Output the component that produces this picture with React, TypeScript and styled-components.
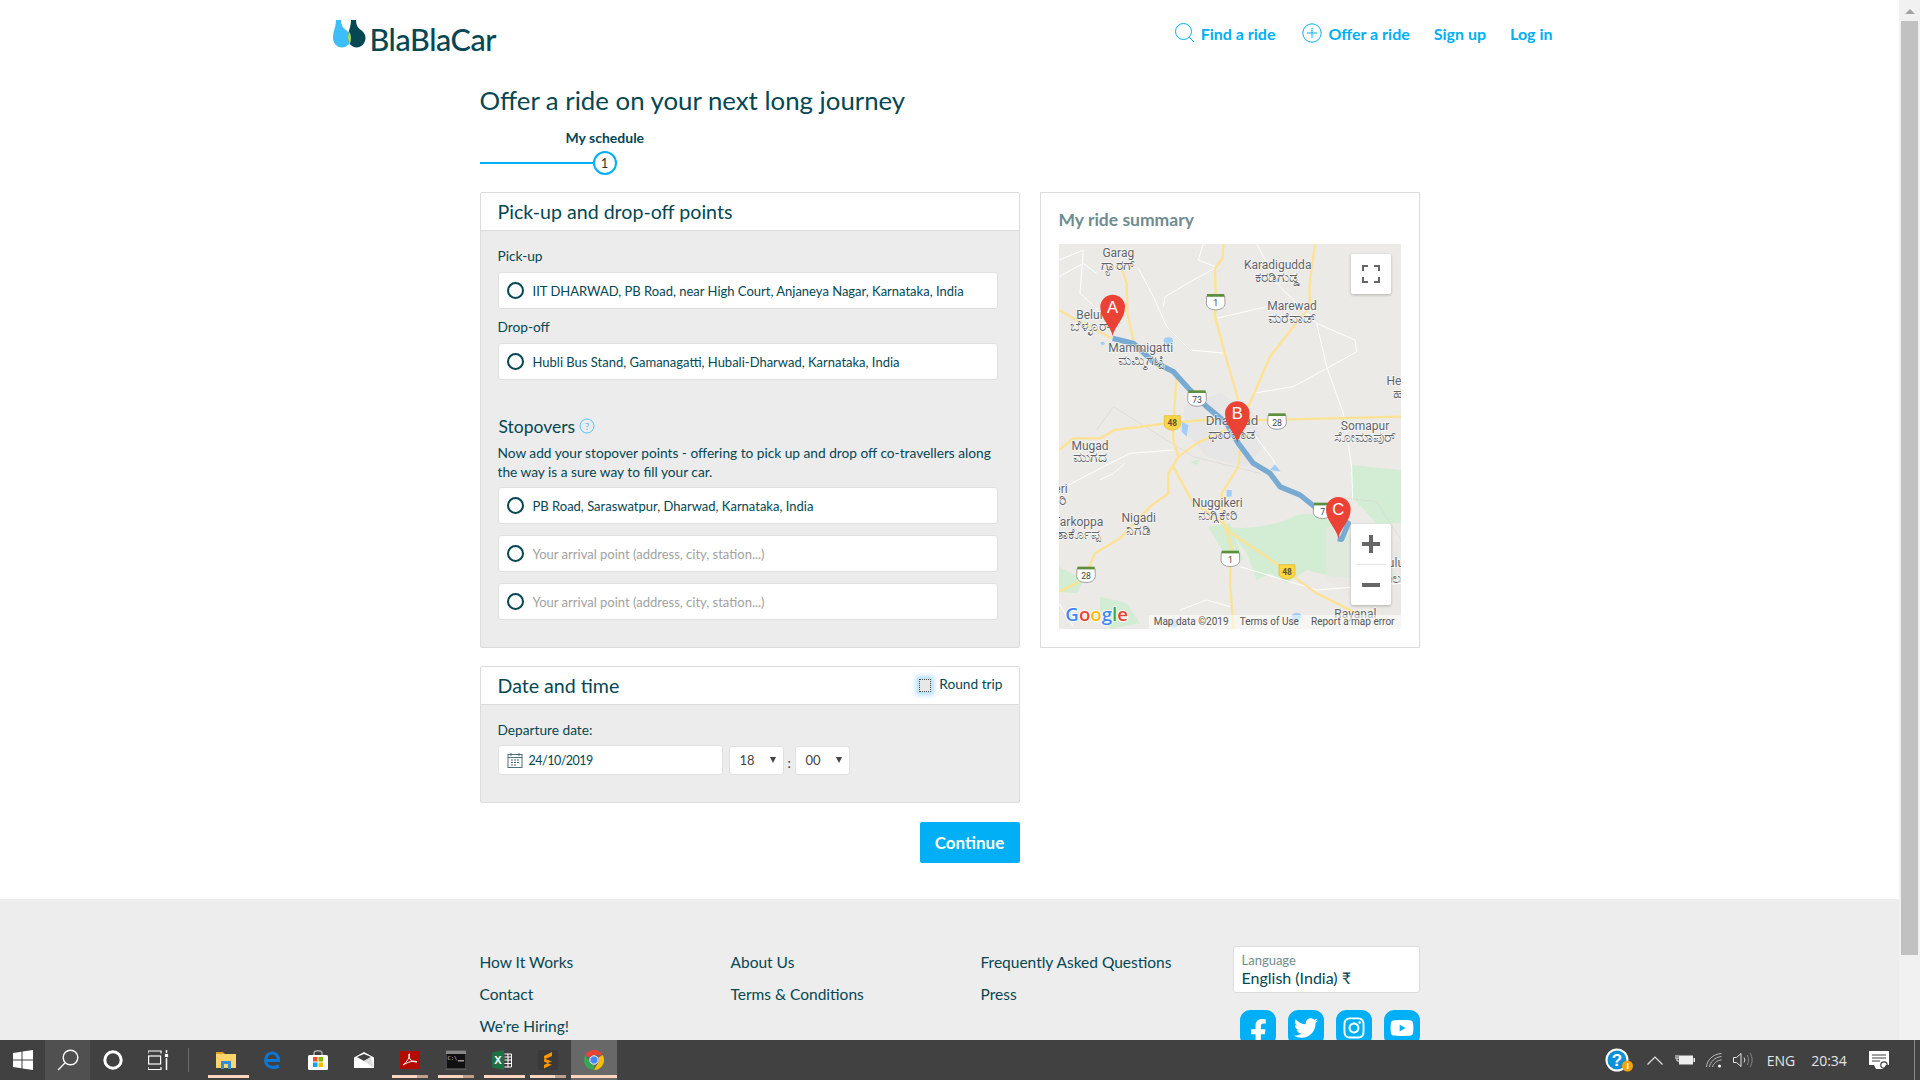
import { FC } from "react"
import styled, { createGlobalStyle } from "styled-components"
import { FaFacebookF, FaTwitter, FaInstagram, FaYoutube } from "react-icons/fa"

const ink = "#054752"
const blue = "#00aff5"
const font = `Lato, "Noto Sans", sans-serif`

const Global = createGlobalStyle`
  html, body { margin: 0; padding: 0; background: #fff; }
  * { box-sizing: border-box; }
`

const Screen = styled.div`
  width: 1920px;
  height: 1080px;
  overflow: hidden;
  display: flex;
  flex-direction: column;
  font-family: ${font};
  color: ${ink};
`
const Viewport = styled.div`
  height: 1040px;
  display: flex;
`
const Page = styled.div`
  flex: 1;
  display: flex;
  flex-direction: column;
  overflow: hidden;
`
const ScrollTrack = styled.div`
  width: 21px;
  background: #f1f1f1;
  padding: 9px 2px 0;
  display: flex;
  flex-direction: column;
  align-items: center;
`
const ScrollArrow = styled.div`
  width: 0;
  height: 0;
  border-left: 5px solid transparent;
  border-right: 5px solid transparent;
  border-bottom: 5px solid #a3a3a3;
`
const ScrollThumb = styled.div`
  width: 17px;
  height: 934px;
  margin-top: 7px;
  background: #c1c1c1;
`

const Header = styled.header`
  width: 1234px;
  height: 70px;
  margin: 0 auto;
  padding: 20px 14px 0 0;
  display: flex;
  justify-content: space-between;
  flex: none;
`
const Logo = styled.div`
  display: flex;
  align-items: flex-end;
  gap: 4px;
  height: 36px;
`
const LogoMarkBox = styled.div`
  align-self: flex-start;
  display: flex;
`
const LogoText = styled.span`
  font-size: 30.5px;
  line-height: 33px;
  font-weight: 500;
  letter-spacing: -0.4px;
  color: ${ink};
`
const Nav = styled.nav`
  display: flex;
  align-items: center;
  height: 26px;
`
const NavLink = styled.a<{ $left: number }>`
  display: flex;
  align-items: center;
  gap: 6px;
  margin-left: ${(p) => p.$left}px;
  color: ${blue};
  font-size: 16px;
  font-weight: 700;
`

const Main = styled.main`
  width: 940px;
  margin: 0 auto;
  flex: none;
`
const Title = styled.h1`
  margin: 15px 0 0;
  font-size: 25.8px;
  line-height: 30px;
  font-weight: 400;
  color: ${ink};
`
const StepLabel = styled.div`
  margin-top: 14px;
  padding-left: 86px;
  font-size: 14px;
  line-height: 18px;
  font-weight: 700;
`
const StepTrack = styled.div`
  margin-top: 4px;
  display: flex;
  align-items: center;
`
const StepLine = styled.div`
  width: 113px;
  height: 2px;
  background: ${blue};
`
const StepDot = styled.div`
  width: 24px;
  height: 24px;
  border: 2px solid ${blue};
  border-radius: 50%;
  display: flex;
  align-items: center;
  justify-content: center;
  font-size: 13px;
  color: #333;
`
const Columns = styled.div`
  margin-top: 17px;
  display: flex;
  align-items: flex-start;
  gap: 20px;
`
const LeftColumn = styled.div`
  width: 540px;
  display: flex;
  flex-direction: column;
`
const Panel = styled.section`
  border: 1px solid #dcdcdc;
  border-radius: 2px;
  background: #ececec;
`
const DatePanel = styled(Panel)`
  margin-top: 18px;
`
const PanelHead = styled.div`
  height: 38px;
  padding: 0 16px 0 17px;
  background: #fff;
  border-bottom: 1px solid #dcdcdc;
  display: flex;
  align-items: center;
  justify-content: space-between;
`
const PanelTitle = styled.h2`
  margin: 0;
  font-size: 19.6px;
  font-weight: 400;
  color: ${ink};
`
const PanelBody = styled.div`
  padding: 16px 21px 27px 17px;
`
const FieldLabel = styled.div<{ $top?: number }>`
  margin-top: ${(p) => p.$top ?? 0}px;
  font-size: 13.7px;
  line-height: 18px;
`
const PlaceField = styled.div<{ $top?: number }>`
  margin-top: ${(p) => p.$top ?? 0}px;
  height: 37px;
  padding-left: 8px;
  display: flex;
  align-items: center;
  gap: 9px;
  background: #fff;
  border: 1px solid #e0e0e0;
  border-radius: 3px;
`
const Radio = styled.span`
  width: 17px;
  height: 17px;
  flex: none;
  border: 2.5px solid ${ink};
  border-radius: 50%;
`
const PlaceText = styled.span<{ $empty?: boolean }>`
  font-size: 13px;
  color: ${(p) => (p.$empty ? "#a2a2a2" : ink)};
`
const StopHead = styled.div`
  margin-top: 34px;
  padding-left: 1px;
  height: 24px;
  display: flex;
  align-items: center;
  gap: 4px;
  font-size: 17.5px;
`
const StopNote = styled.p`
  margin: 5px 0 6px;
  font-size: 13.7px;
  line-height: 19px;
`
const RoundTrip = styled.label`
  display: flex;
  align-items: center;
  gap: 8px;
  font-size: 13.7px;
  padding-bottom: 4px;
`
const Check = styled.span`
  width: 12px;
  height: 13px;
  margin-top: 4px;
  background: #e8e8e8;
  border: 1px dotted #444;
  box-shadow: 0 0 5px 3px rgba(120, 200, 245, 0.6);
`
const DateRow = styled.div`
  margin-top: 6px;
  display: flex;
  align-items: center;
`
const DateField = styled.div`
  width: 225px;
  height: 30px;
  padding-left: 8px;
  display: flex;
  align-items: center;
  gap: 6px;
  font-size: 12.5px;
  letter-spacing: -0.5px;
  background: #fff;
  border: 1px solid #e0e0e0;
  border-radius: 3px;
`
const TimeSelect = styled.div`
  width: 55px;
  height: 29px;
  padding: 0 7px 0 10px;
  display: flex;
  align-items: center;
  justify-content: space-between;
  font-size: 13px;
  color: #444;
  background: #fff;
  border: 1px solid #e0e0e0;
  border-radius: 3px;
`
const HourSelect = styled(TimeSelect)`
  margin-left: 6px;
`
const SelectCaret = styled.span`
  width: 0;
  height: 0;
  border-left: 3.5px solid transparent;
  border-right: 3.5px solid transparent;
  border-top: 6px solid #444;
`
const Colon = styled.span`
  width: 11px;
  padding-top: 6px;
  text-align: center;
  font-size: 13px;
`
const ContinueButton = styled.button`
  margin-top: 19px;
  align-self: flex-end;
  width: 100px;
  height: 41px;
  border: none;
  border-radius: 2px;
  background: ${blue};
  color: #fff;
  font-family: ${font};
  font-size: 17px;
  font-weight: 700;
`

const SummaryPanel = styled.aside`
  width: 380px;
  height: 456px;
  padding: 0 18px;
  border: 1px solid #dcdcdc;
`
const SummaryTitle = styled.h3`
  margin: 0;
  height: 51px;
  padding-top: 14px;
  font-size: 17.5px;
  line-height: 26px;
  font-weight: 700;
  color: #708c91;
`
const MapBox = styled.div`
  position: relative;
  width: 342px;
  height: 385px;
  background: #ebeae6;
  overflow: hidden;
`
const MapControl = styled.div`
  position: absolute;
  right: 10px;
  width: 40px;
  background: #fff;
  border-radius: 2px;
  box-shadow: 0 1px 3px rgba(0, 0, 0, 0.25);
  display: flex;
  flex-direction: column;
  align-items: center;
  justify-content: center;
`
const FullscreenControl = styled(MapControl)`
  top: 10px;
  height: 40px;
`
const ZoomControl = styled(MapControl)`
  top: 280px;
  height: 81px;
`
const ZoomDivider = styled.div`
  width: 30px;
  height: 1px;
  background: #e6e6e6;
`
const ZoomCell = styled.div`
  height: 40px;
  display: flex;
  align-items: center;
  justify-content: center;
`

const Footer = styled.footer`
  margin-top: 36px;
  flex: 1;
  background: #ededed;
`
const FooterGrid = styled.div`
  width: 940px;
  margin: 0 auto;
  padding-top: 47px;
  display: grid;
  grid-template-columns: 251px 250px 252px 187px;
`
const LinkColumn = styled.div`
  display: flex;
  flex-direction: column;
`
const FooterLink = styled.a`
  font-size: 15.5px;
  line-height: 32px;
  color: ${ink};
`
const LanguageBox = styled.div`
  width: 187px;
  height: 47px;
  padding: 6px 8px 0;
  background: #fff;
  border: 1px solid #dcdcdc;
  border-radius: 3px;
`
const LanguageLabel = styled.div`
  font-size: 13px;
  line-height: 15px;
  color: #708c91;
`
const LanguageValue = styled.div`
  font-size: 16px;
  line-height: 19px;
`
const Socials = styled.div`
  margin: 17px 0 0 7px;
  display: flex;
  gap: 12px;
`
const Social = styled.a`
  width: 36px;
  height: 36px;
  border-radius: 10px;
  background: ${blue};
  color: #fff;
  display: flex;
  align-items: center;
  justify-content: center;
  font-size: 24px;
`
const FacebookGlyph = styled(Social)`
  align-items: flex-end;
  padding-left: 2px;
  font-size: 27px;
`

const Taskbar = styled.div`
  height: 40px;
  display: flex;
  align-items: stretch;
  background: #414141;
`
const TaskCell = styled.div<{ $w?: number; $bg?: string }>`
  position: relative;
  width: ${(p) => p.$w ?? 46}px;
  flex: none;
  display: flex;
  align-items: center;
  justify-content: center;
  background: ${(p) => p.$bg ?? "transparent"};
`
const TaskSep = styled.div`
  width: 1px;
  height: 24px;
  margin: 8px 14px 0 7px;
  background: #6a6a6a;
`
const RunBar = styled.span<{ $split?: boolean }>`
  position: absolute;
  left: 5px;
  right: ${(p) => (p.$split ? 5 : 0)}px;
  bottom: 2px;
  height: 3px;
  background: ${(p) =>
    p.$split
      ? "linear-gradient(90deg,#ffd6bf 0 70%,#bfa08f 70% 100%)"
      : "#ffd6bf"};
`
const FullBar = styled(RunBar)`
  left: 0;
`
const Tray = styled.div`
  margin-left: auto;
  display: flex;
  align-items: center;
  color: #e4e4e4;
  font-family: "Open Sans", "Noto Sans", sans-serif;
  font-size: 14px;
`
const TrayItem = styled.div<{ $w: number }>`
  width: ${(p) => p.$w}px;
  height: 40px;
  display: flex;
  align-items: center;
  justify-content: center;
`
const DesktopEdge = styled.div`
  width: 1px;
  height: 40px;
  margin: 0 5px 0 9px;
  background: #8a8a8a;
`

const LogoMark = () => (
  <svg width="33" height="28" viewBox="0 0 33 28">
    <path d="M3 0 H8 C8 5 10 8 13 10 C16 12 18 15 18 18 C18 23 14 27.5 9 27.5 C4 27.5 0 23 0 18 C0 11 3 7 3 0Z" fill="#3dbdf9" />
    <path d="M18 0 H23 C23 5 25 8 28 10 C31 12 32.5 15 32.5 18 C32.5 23 28.5 27.5 23.5 27.5 C19 27.5 15 23 15 18 C15 11 18 7 18 0Z" fill="#054752" />
    <path d="M16 11.5 C15 14 15 16 15 18 C15 20.5 15.8 22.5 16.6 24 C17.6 22.5 18 20.5 18 18 C18 15.5 17.2 13 16 11.5Z" fill="#a3d86a" />
  </svg>
)

const HelpIcon = () => (
  <svg width="16" height="16" viewBox="0 0 16 16">
    <circle cx="8" cy="8" r="7" fill="none" stroke="#54c6f7" strokeWidth="1" />
    <text x="8" y="11.5" textAnchor="middle" fontSize="10" fontFamily="Lato" fill="#54c6f7">?</text>
  </svg>
)

const CalendarIcon = () => (
  <svg width="16" height="16" viewBox="0 0 16 16" fill="none" stroke="#4f7076" strokeWidth="1">
    <rect x="1" y="2.5" width="14" height="13" />
    <path d="M1 5.5H15M4 1V4M12 1V4" />
    <path d="M4 8H6M7 8H9M10 8H12M4 10.5H6M7 10.5H9M10 10.5H12M4 13H6M7 13H9" />
  </svg>
)

type Label = { x: number; y: number; t: string; s?: number }
const labels: Label[] = [
  { x: 235, y: 232, t: "Garag" },
  { x: 235, y: 270, t: "ಗ್ಯಾರಗ್", s: 42 },
  { x: 713, y: 268, t: "Karadigudda" },
  { x: 713, y: 307, t: "ಕರಡಿಗುಡ್ಡ", s: 42 },
  { x: 756, y: 391, t: "Marewad" },
  { x: 756, y: 430, t: "ಮರೆವಾಡ್", s: 42 },
  { x: 150, y: 416, t: "Belur" },
  { x: 150, y: 454, t: "ಬೆಳ್ಳೂರ್", s: 42 },
  { x: 302, y: 515, t: "Mammigatti" },
  { x: 302, y: 554, t: "ಮಮ್ಮಿಗಟ್ಟಿ", s: 42 },
  { x: 1105, y: 615, t: "Hebballi" },
  { x: 1105, y: 654, t: "ಹೆಬ್ಬಳ್ಳಿ", s: 42 },
  { x: 576, y: 735, t: "Dharwad", s: 40 },
  { x: 576, y: 778, t: "ಧಾರವಾಡ", s: 46 },
  { x: 975, y: 749, t: "Somapur" },
  { x: 975, y: 787, t: "ಸೋಮಾಪುರ್", s: 42 },
  { x: 150, y: 809, t: "Mugad" },
  { x: 150, y: 847, t: "ಮುಗದ", s: 42 },
  { x: 52, y: 938, t: "Keri" },
  { x: 52, y: 976, t: "ಕೇರಿ", s: 42 },
  { x: 115, y: 1037, t: "Tarkoppa" },
  { x: 115, y: 1077, t: "ತಾರ್ಕೊಪ್ಪ", s: 42 },
  { x: 296, y: 1026, t: "Nigadi" },
  { x: 296, y: 1064, t: "ನಿಗಡಿ", s: 42 },
  { x: 532, y: 982, t: "Nuggikeri" },
  { x: 532, y: 1021, t: "ನುಗ್ಗಿಕೇರಿ", s: 42 },
  { x: 1055, y: 1160, t: "Hulu" },
  { x: 1055, y: 1208, t: "ಹುಲು", s: 42 },
  { x: 946, y: 1315, t: "Rayanal" },
]

const Shield = ({ x, y, n }: { x: number; y: number; n: string }) => (
  <g>
    <path d={`M${x - 27} ${y - 18} H${x + 27} L${x + 28} ${y + 6} Q${x + 26} ${y + 22} ${x} ${y + 24} Q${x - 26} ${y + 22} ${x - 28} ${y + 6}Z`} fill="#fff" stroke="#777" strokeWidth="2" />
    <rect x={x - 26} y={y - 24} width="52" height="8" fill="#5d8f3c" />
    <text x={x} y={y + 13} textAnchor="middle" fontSize="26" fontFamily="Roboto" fill="#444">{n}</text>
  </g>
)
const YellowShield = ({ x, y, n }: { x: number; y: number; n: string }) => (
  <g>
    <path d={`M${x - 24} ${y - 21} H${x + 24} V${y + 8} Q${x + 22} ${y + 19} ${x} ${y + 23} Q${x - 22} ${y + 19} ${x - 24} ${y + 8}Z`} fill="#fcd645" stroke="#dcb52c" strokeWidth="2" />
    <text x={x} y={y + 10} textAnchor="middle" fontSize="25" fontWeight="700" fontFamily="Roboto" fill="#5f5233">{n}</text>
  </g>
)
const Pin = ({ x, y, l }: { x: number; y: number; l: string }) => (
  <g>
    <path d={`M${x} ${y} C${x - 6} ${y - 32} ${x - 37} ${y - 50} ${x - 37} ${y - 87} A37 37 0 1 1 ${x + 37} ${y - 87} C${x + 37} ${y - 50} ${x + 6} ${y - 32} ${x} ${y}Z`} fill="#ea4335" />
    <text x={x} y={y - 70} textAnchor="middle" fontSize="50" fontFamily="Liberation Sans" fill="#fff">{l}</text>
  </g>
)

const MapDrawing = () => (
  <svg width="342" height="385" viewBox="57 192 1026 1155" fontFamily="Roboto, sans-serif">
    <rect x="57" y="192" width="1026" height="1155" fill="#ebeae6" />
    <g fill="#d2edd3">
      <path d="M935 855 L1083 870 V1030 L1010 1030 L935 950Z" />
      <path d="M560 1040 C620 1050 700 1040 760 1010 C800 990 860 1010 900 1050 L1000 1110 L1083 1200 L880 1190 L800 1170 L740 1210 L690 1180 L650 1200 L620 1120Z" />
      <path d="M505 1040 L570 1030 L610 1140 L560 1130Z" />
      <path d="M57 1160 L130 1200 L110 1240 L57 1235Z" />
      <path d="M180 1250 L260 1270 L300 1330 L210 1347 L180 1300Z" />
      <path d="M450 845 L480 838 L470 855Z" />
    </g>
    <path d="M430 680 L540 640 L640 700 L670 800 L620 860 L500 830 L440 760Z" fill="#e6e6e7" />
    <path d="M860 1040 L930 1040 L1000 1100 L1083 1080 V1340 L860 1200Z" fill="#e7e6e3" opacity=".6" />
    <g fill="none" stroke="#fff" strokeWidth="3">
      <path d="M57 240 L130 210 L120 340 L175 390" />
      <path d="M57 290 L130 250 L170 280" />
      <path d="M295 265 L340 350 L380 440 L450 510 L560 520" />
      <path d="M490 192 L475 240 L530 262" />
      <path d="M370 380 L375 350 L460 300 L525 265" />
      <path d="M530 415 L680 380" />
      <path d="M650 192 L720 320 L830 430 L860 560 L910 700 L935 860 L938 960" />
      <path d="M830 430 L945 480 L950 515 L870 560 L760 620 L640 640" />
      <path d="M57 930 L190 860 L270 820 L400 810" />
      <path d="M180 900 L220 880 L255 850" />
      <path d="M640 760 L700 840 L720 880" />
      <path d="M600 1160 L700 1190 L830 1230 L1083 1210" />
      <path d="M57 1270 L100 1340" />
      <path d="M420 1290 L500 1260 L570 1280" />
    </g>
    <g fill="none" stroke="#d8d7d3" strokeWidth="2">
      <path d="M170 750 L220 680 L380 780 L460 830 L660 880" />
      <path d="M880 950 L1010 965 L1083 1080" />
    </g>
    <g fill="none" stroke="#fde293" strokeWidth="7">
      <path d="M550 192 L548 235 L525 265 L527 340 L525 410 L560 540 L595 660" />
      <path d="M825 192 L808 320 L810 380 L760 440 L690 530 L625 680" />
      <path d="M57 390 L110 420 L215 475" />
      <path d="M240 250 L260 310 L262 400 L280 480" />
      <path d="M57 810 L100 775 L180 775 L225 750 L380 730 L490 720 L680 720 L1083 710" />
      <path d="M410 590 L400 730 L400 780 L415 830 L385 880 L385 940 L330 980 L240 1075 L165 1120 L130 1200 L57 1235" />
      <path d="M400 860 L460 970 L540 1020 L575 1060 L680 1130 L740 1175 L830 1240 L950 1300" />
      <path d="M600 810 L595 860 L545 940 L545 1010 L575 1100 L570 1200 L580 1347" />
      <path d="M415 830 L470 790 L570 745" />
    </g>
    <g fill="#a3cdf5">
      <ellipse cx="385" cy="482" rx="14" ry="10" />
      <ellipse cx="188" cy="490" rx="6" ry="5" />
      <path d="M425 725 L445 735 L440 770 L425 755Z" />
      <path d="M690 870 L705 853 L722 875Z" />
      <rect x="560" y="930" width="15" height="20" />
      <ellipse cx="770" cy="1310" rx="15" ry="12" />
      <ellipse cx="400" cy="1330" rx="18" ry="12" />
    </g>
    <path d="M218 475 L280 490 L340 545 L400 575 L450 630 L500 680 L560 730 L595 790 L640 850 L690 880 L720 920 L780 945 L830 985 L900 1020 L925 1030 L905 1078 L893 1076" fill="none" stroke="#6ba3cf" strokeWidth="16" strokeLinejoin="round" opacity=".9" />
    {labels.map((a) => (
      <text key={a.t} x={a.x} y={a.y} textAnchor="middle" fontSize={a.s ?? 36} fill="#5f6368" stroke="#fff" strokeWidth="4" strokeOpacity=".75" paintOrder="stroke">{a.t}</text>
    ))}
    <Shield x={527} y={366} n="1" />
    <Shield x={471} y={655} n="73" />
    <Shield x={711} y={724} n="28" />
    <Shield x={138} y={1184} n="28" />
    <Shield x={571} y={1136} n="1" />
    <Shield x={848} y={992} n="7" />
    <YellowShield x={397} y={728} n="48" />
    <YellowShield x={741} y={1175} n="48" />
    <Pin x={218} y={468} l="A" />
    <Pin x={592} y={788} l="B" />
    <Pin x={895} y={1075} l="C" />
    <rect x="327" y="1305" width="756" height="42" fill="#fff" fillOpacity=".55" />
    <text x="341" y="1335" fontSize="30" fill="#555">Map data ©2019</text>
    <text x="599" y="1335" fontSize="30" fill="#555">Terms of Use</text>
    <text x="813" y="1335" fontSize="30" fill="#555">Report a map error</text>
    <text x="76" y="1323" fontSize="56" fontWeight="600" fontFamily="Open Sans, sans-serif" stroke="#fff" strokeWidth="5" paintOrder="stroke">
      <tspan fill="#4285f4">G</tspan><tspan fill="#ea4335">o</tspan><tspan fill="#fbbc05">o</tspan><tspan fill="#4285f4">g</tspan><tspan fill="#34a853">l</tspan><tspan fill="#ea4335">e</tspan>
    </text>
  </svg>
)

const taskW = { width: 20, height: 20 }

const WindowsIcon = () => (
  <svg {...taskW} viewBox="0 0 20 20"><path d="M0 3L8.5 1.8V9.5H0ZM9.5 1.6L20 0V9.5H9.5ZM0 10.5H8.5V18.2L0 17ZM9.5 10.5H20V20L9.5 18.4Z" fill="#fff" /></svg>
)
const SearchGlyph = () => (
  <svg width="22" height="22" viewBox="0 0 22 22" fill="none" stroke="#fff" strokeWidth="1.4"><circle cx="13.5" cy="8.5" r="7.3" /><path d="M8.2 13.8L1 21" /></svg>
)
const CortanaIcon = () => (
  <svg {...taskW} viewBox="0 0 20 20"><circle cx="10" cy="10" r="8.2" fill="none" stroke="#fff" strokeWidth="3" /></svg>
)
const TaskViewIcon = () => (
  <svg width="21" height="20" viewBox="0 0 21 20" fill="none" stroke="#fff" strokeWidth="1.2"><path d="M0 3.5V1H13V3.5M0 17V19.5H13V17" /><rect x="0.6" y="6" width="12" height="8" /><path d="M18.5 0V3M18.5 8V20" strokeWidth="1.5" /><rect x="17.5" y="4.5" width="2" height="2" fill="#fff" /></svg>
)
const ExplorerIcon = () => (
  <svg {...taskW} viewBox="0 0 20 20"><path d="M0 2H7L9 4H0Z" fill="#e0a020" /><rect y="4" width="20" height="14" fill="#fbd56b" /><path d="M5 19V11H15V19H12V14H8V19Z" fill="#2f8fd8" /></svg>
)
const EdgeIcon = () => (
  <svg width="17" height="18" viewBox="0 0 17 18">
    <path d="M2 9.5 H14.5 C14.5 4.5 11.5 2 8 2 C4 2 1.7 5.5 1.7 9.5 C1.7 14 5 16.4 9 16.4 C11 16.4 13 16 15 15" stroke="#0a78d7" strokeWidth="3.2" fill="none" />
  </svg>
)
const StoreIcon = () => (
  <svg {...taskW} viewBox="0 0 20 20">
    <path d="M6 5V3C6 0 14 0 14 3V5" fill="none" stroke="#aaa" strokeWidth="1.5" />
    <rect y="5" width="20" height="15" rx="1.5" fill="#fff" />
    <rect x="5" y="7" width="4.5" height="4.5" fill="#f25022" /><rect x="10.5" y="7" width="4.5" height="4.5" fill="#7fba00" />
    <rect x="5" y="12.5" width="4.5" height="4.5" fill="#00a4ef" /><rect x="10.5" y="12.5" width="4.5" height="4.5" fill="#ffb900" />
  </svg>
)
const MailIcon = () => (
  <svg {...taskW} viewBox="0 0 20 20"><path d="M0 7.5L10 2L20 7.5V18H0Z" fill="#fff" /><path d="M3 7L10 4L17 7L10 11Z" fill="#414141" /><path d="M10 11L17 7L20 18Z" fill="#ddd" /></svg>
)
const AcrobatIcon = () => (
  <svg {...taskW} viewBox="0 0 20 20"><rect width="20" height="18" y="1" fill="#b30b00" /><path d="M3 15C7 12 10 7 9.5 4C9 3 8 5 10 9C11 11 14 12 17 12C14 10 8 12 3 15Z" fill="none" stroke="#fff" strokeWidth="1" /></svg>
)
const ConsoleIcon = () => (
  <svg {...taskW} viewBox="0 0 20 20"><rect y="1" width="20" height="18" fill="#111" stroke="#777" /><rect y="1" width="20" height="3" fill="#888" /><text x="1.5" y="10" fontSize="5.5" fontFamily="DejaVu Sans Mono" fill="#ccc">C:\</text><rect x="12" y="10" width="6" height="1.5" fill="#999" /></svg>
)
const ExcelIcon = () => (
  <svg {...taskW} viewBox="0 0 20 20"><path d="M0 2.5L12 0V20L0 17.5Z" fill="#1d7145" /><text x="6" y="14" textAnchor="middle" fontSize="11" fontWeight="700" fontFamily="Liberation Sans" fill="#fff">X</text><path d="M12.5 4H19.5V17H12.5M12.5 7H19.5M12.5 10H19.5M12.5 13.5H19.5M16 4V17" fill="none" stroke="#fff" strokeWidth="1" /></svg>
)
const SublimeIcon = () => (
  <svg {...taskW} viewBox="0 0 20 20"><rect width="20" height="20" fill="#3a3a3a" /><path d="M14 2L6 6V9.5L14 6ZM6 8.5L14 11.5V15L6 11.5ZM14 11L6 15V18.5L14 14.5Z" fill="#ff9800" /></svg>
)
const ChromeIcon = () => (
  <svg {...taskW} viewBox="0 0 20 20">
    <path d="M10 0A10 10 0 0 1 18.7 5H10A5 5 0 0 0 5.5 7.8L1.5 4.8A10 10 0 0 1 10 0Z" fill="#ea4335" />
    <path d="M18.7 5A10 10 0 0 1 10 20L14.3 12.5A5 5 0 0 0 14.3 7.5Z" fill="#fbbc05" />
    <path d="M10 20A10 10 0 0 1 1.5 4.8L5.7 12.5A5 5 0 0 0 10.5 15Z" fill="#34a853" />
    <circle cx="10" cy="10" r="4.2" fill="#4285f4" stroke="#fff" strokeWidth="1" />
  </svg>
)
const TrayHelp = () => (
  <svg width="28" height="24" viewBox="0 0 28 24">
    <circle cx="12" cy="12" r="10.5" fill="#0e8fd8" stroke="#fff" strokeWidth="2" />
    <text x="12" y="18" textAnchor="middle" fontSize="17" fontWeight="700" fontFamily="Liberation Sans" fill="#fff">?</text>
    <circle cx="22.5" cy="18" r="5.5" fill="#f5a300" />
    <rect x="21.8" y="15" width="1.6" height="6" fill="#fff" />
  </svg>
)
const CaretUp = () => (
  <svg width="16" height="9" viewBox="0 0 16 9" fill="none" stroke="#e4e4e4" strokeWidth="1.2"><path d="M0.5 8.5L8 1L15.5 8.5" /></svg>
)
const BatteryIcon = () => (
  <svg width="20" height="12" viewBox="0 0 20 12"><path d="M0 2H4M0 4H4M2 4V7H5" fill="none" stroke="#eee" strokeWidth="1" /><rect x="4" y="1.5" width="14" height="9" fill="#eee" /><rect x="18.5" y="4" width="1.5" height="4" fill="#eee" /></svg>
)
const WifiIcon = () => (
  <svg width="16" height="15" viewBox="0 0 16 15" fill="none" stroke="#bbb" strokeWidth="1"><path d="M0.5 14C1 7 7 1 15.5 0.5M3.5 14C4 9 9 4 15.5 3.5M6.5 14C7 11 11 7 15.5 7" /><circle cx="13.5" cy="13" r="1.5" fill="#fff" stroke="none" /></svg>
)
const VolumeIcon = () => (
  <svg width="20" height="16" viewBox="0 0 20 16" fill="none" stroke="#e4e4e4" strokeWidth="1"><path d="M0.5 5.5H3.5L8 1.5V14.5L3.5 10.5H0.5Z" /><path d="M11 5.5C12 7 12 9 11 10.5" /><path d="M14 3C16 6 16 10 14 13M17 1C19.8 5 19.8 11 17 15" stroke="#888" /></svg>
)
const NotifyIcon = () => (
  <svg width="20" height="20" viewBox="0 0 20 20"><path d="M0 1H20V15H17L14 19H7L5 15H0Z" fill="#fff" /><path d="M3 5H17M3 8H17M3 11H11" stroke="#414141" strokeWidth="1" /><circle cx="15" cy="15" r="3.2" fill="none" stroke="#414141" strokeWidth="1.2" /></svg>
)

const places = [
  "PB Road, Saraswatpur, Dharwad, Karnataka, India",
  "Your arrival point (address, city, station...)",
  "Your arrival point (address, city, station...)",
]

const App: FC = () => {
  return (
    <Screen>
      <Global />
      <Viewport>
        <Page>
          <Header>
            <Logo>
              <LogoMarkBox><LogoMark /></LogoMarkBox>
              <LogoText>BlaBlaCar</LogoText>
            </Logo>
            <Nav>
              <NavLink $left={0}>
                <svg width="20" height="20" viewBox="0 0 20 20" fill="none" stroke={blue} strokeWidth="1"><circle cx="8.5" cy="8.5" r="8" /><path d="M14.2 14.2L19 19" /></svg>
                Find a ride
              </NavLink>
              <NavLink $left={27}>
                <svg width="20" height="20" viewBox="0 0 20 20" fill="none" stroke={blue} strokeWidth="1"><circle cx="10" cy="10" r="9.2" /><path d="M10 5V15M5 10H15" /></svg>
                Offer a ride
              </NavLink>
              <NavLink $left={24}>Sign up</NavLink>
              <NavLink $left={24}>Log in</NavLink>
            </Nav>
          </Header>
          <Main>
            <Title>Offer a ride on your next long journey</Title>
            <StepLabel>My schedule</StepLabel>
            <StepTrack>
              <StepLine />
              <StepDot>1</StepDot>
            </StepTrack>
            <Columns>
              <LeftColumn>
                <Panel>
                  <PanelHead>
                    <PanelTitle>Pick-up and drop-off points</PanelTitle>
                  </PanelHead>
                  <PanelBody>
                    <FieldLabel>Pick-up</FieldLabel>
                    <PlaceField $top={7}>
                      <Radio />
                      <PlaceText>IIT DHARWAD, PB Road, near High Court, Anjaneya Nagar, Karnataka, India</PlaceText>
                    </PlaceField>
                    <FieldLabel $top={9}>Drop-off</FieldLabel>
                    <PlaceField $top={7}>
                      <Radio />
                      <PlaceText>Hubli Bus Stand, Gamanagatti, Hubali-Dharwad, Karnataka, India</PlaceText>
                    </PlaceField>
                    <StopHead>
                      Stopovers
                      <HelpIcon />
                    </StopHead>
                    <StopNote>Now add your stopover points - offering to pick up and drop off co-travellers along the way is a sure way to fill your car.</StopNote>
                    {places.map((a, i) => (
                      <PlaceField key={i} $top={i ? 11 : 0}>
                        <Radio />
                        <PlaceText $empty={i > 0}>{a}</PlaceText>
                      </PlaceField>
                    ))}
                  </PanelBody>
                </Panel>
                <DatePanel>
                  <PanelHead>
                    <PanelTitle>Date and time</PanelTitle>
                    <RoundTrip>
                      <Check />
                      Round trip
                    </RoundTrip>
                  </PanelHead>
                  <PanelBody>
                    <FieldLabel>Departure date:</FieldLabel>
                    <DateRow>
                      <DateField>
                        <CalendarIcon />
                        24/10/2019
                      </DateField>
                      <HourSelect>18<SelectCaret /></HourSelect>
                      <Colon>:</Colon>
                      <TimeSelect>00<SelectCaret /></TimeSelect>
                    </DateRow>
                  </PanelBody>
                </DatePanel>
                <ContinueButton>Continue</ContinueButton>
              </LeftColumn>
              <SummaryPanel>
                <SummaryTitle>My ride summary</SummaryTitle>
                <MapBox>
                  <MapDrawing />
                  <FullscreenControl>
                    <svg width="18" height="18" viewBox="0 0 18 18" fill="none" stroke="#666" strokeWidth="2"><path d="M1 6V1H6M12 1H17V6M17 12V17H12M6 17H1V12" /></svg>
                  </FullscreenControl>
                  <ZoomControl>
                    <ZoomCell>
                      <svg width="18" height="18" viewBox="0 0 18 18" fill="#666"><path d="M7 0H11V7H18V11H11V18H7V11H0V7H7Z" /></svg>
                    </ZoomCell>
                    <ZoomDivider />
                    <ZoomCell>
                      <svg width="18" height="4" viewBox="0 0 18 4" fill="#666"><rect width="18" height="4" /></svg>
                    </ZoomCell>
                  </ZoomControl>
                </MapBox>
              </SummaryPanel>
            </Columns>
          </Main>
          <Footer>
            <FooterGrid>
              <LinkColumn>
                <FooterLink>How It Works</FooterLink>
                <FooterLink>Contact</FooterLink>
                <FooterLink>We're Hiring!</FooterLink>
              </LinkColumn>
              <LinkColumn>
                <FooterLink>About Us</FooterLink>
                <FooterLink>Terms &amp; Conditions</FooterLink>
              </LinkColumn>
              <LinkColumn>
                <FooterLink>Frequently Asked Questions</FooterLink>
                <FooterLink>Press</FooterLink>
              </LinkColumn>
              <div>
                <LanguageBox>
                  <LanguageLabel>Language</LanguageLabel>
                  <LanguageValue>English (India) ₹</LanguageValue>
                </LanguageBox>
                <Socials>
                  <FacebookGlyph><FaFacebookF /></FacebookGlyph>
                  <Social><FaTwitter /></Social>
                  <Social><FaInstagram /></Social>
                  <Social><FaYoutube /></Social>
                </Socials>
              </div>
            </FooterGrid>
          </Footer>
        </Page>
        <ScrollTrack>
          <ScrollArrow />
          <ScrollThumb />
        </ScrollTrack>
      </Viewport>
      <Taskbar>
        <TaskCell $w={45}><WindowsIcon /></TaskCell>
        <TaskCell $w={45} $bg="#505050"><SearchGlyph /></TaskCell>
        <TaskCell $w={45}><CortanaIcon /></TaskCell>
        <TaskCell $w={46}><TaskViewIcon /></TaskCell>
        <TaskSep />
        <TaskCell><ExplorerIcon /><RunBar /></TaskCell>
        <TaskCell><EdgeIcon /></TaskCell>
        <TaskCell><StoreIcon /></TaskCell>
        <TaskCell><MailIcon /></TaskCell>
        <TaskCell><AcrobatIcon /><RunBar $split /></TaskCell>
        <TaskCell><ConsoleIcon /><RunBar $split /></TaskCell>
        <TaskCell><ExcelIcon /><RunBar /></TaskCell>
        <TaskCell><SublimeIcon /><RunBar $split /></TaskCell>
        <TaskCell $bg="#686868"><ChromeIcon /><FullBar /></TaskCell>
        <Tray>
          <TrayItem $w={38}><TrayHelp /></TrayItem>
          <TrayItem $w={33}><CaretUp /></TrayItem>
          <TrayItem $w={28}><BatteryIcon /></TrayItem>
          <TrayItem $w={30}><WifiIcon /></TrayItem>
          <TrayItem $w={28}><VolumeIcon /></TrayItem>
          <TrayItem $w={48}>ENG</TrayItem>
          <TrayItem $w={48}>20:34</TrayItem>
          <TrayItem $w={52}><NotifyIcon /></TrayItem>
          <DesktopEdge />
        </Tray>
      </Taskbar>
    </Screen>
  )
}

export default App
